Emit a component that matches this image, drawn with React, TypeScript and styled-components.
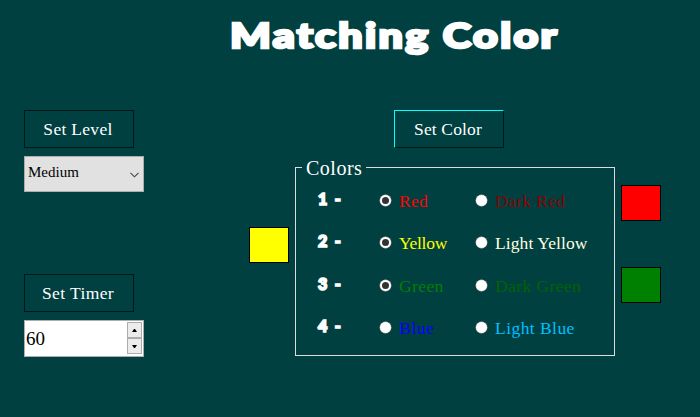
import React from "react";
import styled, { createGlobalStyle } from "styled-components";

const GlobalStyle = createGlobalStyle`
  * { box-sizing: border-box; }
  body { margin: 0; background: #004040; }
`;

const serif = `"Liberation Serif", "Times New Roman", serif`;
const heavy = `Lato, "Open Sans", sans-serif`;

const Page = styled.div`
  width: 700px;
  height: 417px;
  overflow: hidden;
  background: #004040;
  color: #fff;
  font-family: ${serif};
`;

const Title = styled.h1`
  margin: 0 0 0 230px;
  width: max-content;
  height: 110px;
  padding-top: 11px;
  font: 900 35px/46px ${heavy};
  letter-spacing: 1.9px;
  white-space: nowrap;
  transform-origin: left top;
  transform: scaleX(1.228);
  -webkit-text-stroke: 2.6px #fff;
`;

const Board = styled.main`
  display: grid;
  grid-template-columns: 219px 40px 320px 40px;
  column-gap: 6px;
  margin-left: 24px;
`;

const Settings = styled.section`
  display: flex;
  flex-direction: column;
  align-items: flex-start;
`;

const Setting = styled.div`
  display: flex;
  flex-direction: column;
  gap: 8px;
  height: 164px;
`;

const Button = styled.button<{ $active?: boolean; $track: number }>`
  width: 110px;
  height: 38px;
  padding: 0 2px 0 0;
  border: 1px solid #001818;
  border-top-color: ${(p) => (p.$active ? "#00ffff" : "#001818")};
  border-left-color: ${(p) => (p.$active ? "#00ffff" : "#001818")};
  border-radius: 0;
  background: #004040;
  color: #fff;
  font: 17.5px/20px ${serif};
  letter-spacing: ${(p) => p.$track}px;
`;

const Select = styled.div`
  display: flex;
  align-items: center;
  justify-content: space-between;
  width: 120px;
  height: 36px;
  padding: 0 4px 3px 3px;
  border: 1px solid #adadad;
  background: #e1e1e1;
  color: #000;
  font-size: 15px;

  svg {
    margin-top: 4px;
  }
`;

const Spinner = styled.div`
  display: flex;
  justify-content: space-between;
  width: 120px;
  height: 37px;
  padding: 1px 1px 2px 1px;
  border: 1px solid #abadb3;
  background: #fff;
  color: #000;
  font-size: 19px;
  line-height: 34px;
`;

const Steps = styled.div`
  display: flex;
  flex-direction: column;
  width: 15px;
`;

const Step = styled.div`
  display: grid;
  place-items: center;
  height: 16px;
  border: 1px solid #acacac;
  background: #ececec;

  svg {
    display: block;
  }
`;

const Side = styled.div<{ $top: number }>`
  display: flex;
  flex-direction: column;
  gap: 46px;
  padding-top: ${(p) => p.$top}px;
`;

const Swatch = styled.div<{ $color: string }>`
  width: 40px;
  height: 36px;
  border: 1px solid #000;
  background: ${(p) => p.$color};
`;

const Center = styled.section`
  display: flex;
  flex-direction: column;
  gap: 8px;

  & > button {
    margin-left: 99px;
  }
`;

const Group = styled.fieldset`
  margin: 0;
  width: 320px;
  height: 200px;
  padding: 10px 6px 0;
  border: 1px solid #dcdcdc;
`;

const Legend = styled.legend`
  height: 23px;
  padding: 0 4px;
  font-size: 20px;
  line-height: 25px;
  letter-spacing: 0.5px;
`;

const Row = styled.div<{ $height: number }>`
  display: grid;
  grid-template-columns: 61px 96px 1fr;
  height: ${(p) => p.$height}px;
  padding-left: 16px;
  align-items: start;
`;

const Num = styled.span`
  font: 900 16px/20px ${heavy};
  letter-spacing: 1.6px;
  word-spacing: 0.5px;
  -webkit-text-stroke: 1.7px #fff;
`;

const Option = styled.label<{ $color: string; $track: number }>`
  display: flex;
  align-items: center;
  gap: 7px;
  height: 22px;
  color: ${(p) => p.$color};
  font-size: 17.5px;
  line-height: 22px;
  letter-spacing: ${(p) => p.$track}px;
  white-space: nowrap;

  span {
    padding-top: 2px;
  }
`;

const Radio = ({ on }: { on?: boolean }) => (
  <svg width="13" height="13" viewBox="0 0 13 13">
    <circle cx="6.5" cy="6.5" r="5.9" fill="#fff" stroke="#333" strokeWidth="0.4" />
    {on && <circle cx="6.5" cy="6.5" r="3.5" fill="#333" />}
  </svg>
);

type Choice = { text: string; color: string; track: number; on?: boolean };

const rows: { height: number; choices: Choice[] }[] = [
  { height: 42, choices: [
    { text: "Red", color: "#ff0000", track: 0.3, on: true },
    { text: "Dark Red", color: "#8b0000", track: 0.35 },
  ] },
  { height: 43, choices: [
    { text: "Yellow", color: "#ffff00", track: -0.3, on: true },
    { text: "Light Yellow", color: "#ffffe0", track: 0.1 },
  ] },
  { height: 42, choices: [
    { text: "Green", color: "#008000", track: 0.4, on: true },
    { text: "Dark Green", color: "#006400", track: 0.4 },
  ] },
  { height: 28, choices: [
    { text: "Blue", color: "#0000ff", track: 0.5 },
    { text: "Light Blue", color: "#00bfff", track: 0.45 },
  ] },
];

export default function App() {
  return (
    <Page>
      <GlobalStyle />
      <Title>Matching Color</Title>
      <Board>
        <Settings>
          <Setting>
            <Button $track={0.3}>Set Level</Button>
            <Select>
              Medium
              <svg width="9" height="6" viewBox="0 0 9 6">
                <path d="M.5 .8 4.5 4.8 8.5 .8" fill="none" stroke="#444" strokeWidth="1.1" />
              </svg>
            </Select>
          </Setting>
          <Setting>
            <Button $track={0.4}>Set Timer</Button>
            <Spinner>
              60
              <Steps>
                <Step>
                  <svg width="5" height="3" viewBox="0 0 5 3"><path d="M0 3 2 0H3L5 3Z" /></svg>
                </Step>
                <Step>
                  <svg width="5" height="3" viewBox="0 0 5 3"><path d="M0 0 2 3H3L5 0Z" /></svg>
                </Step>
              </Steps>
            </Spinner>
          </Setting>
        </Settings>
        <Side $top={117}>
          <Swatch $color="#ffff00" />
        </Side>
        <Center>
          <Button $active $track={0.15}>Set Color</Button>
          <Group>
            <Legend>Colors</Legend>
            {rows.map((row, i) => (
              <Row key={i} $height={row.height}>
                <Num>{i + 1} -</Num>
                {row.choices.map((c) => (
                  <Option key={c.text} $color={c.color} $track={c.track}>
                    <Radio on={c.on} />
                    <span>{c.text}</span>
                  </Option>
                ))}
              </Row>
            ))}
          </Group>
        </Center>
        <Side $top={75}>
          <Swatch $color="#ff0000" />
          <Swatch $color="#008000" />
        </Side>
      </Board>
    </Page>
  );
}
